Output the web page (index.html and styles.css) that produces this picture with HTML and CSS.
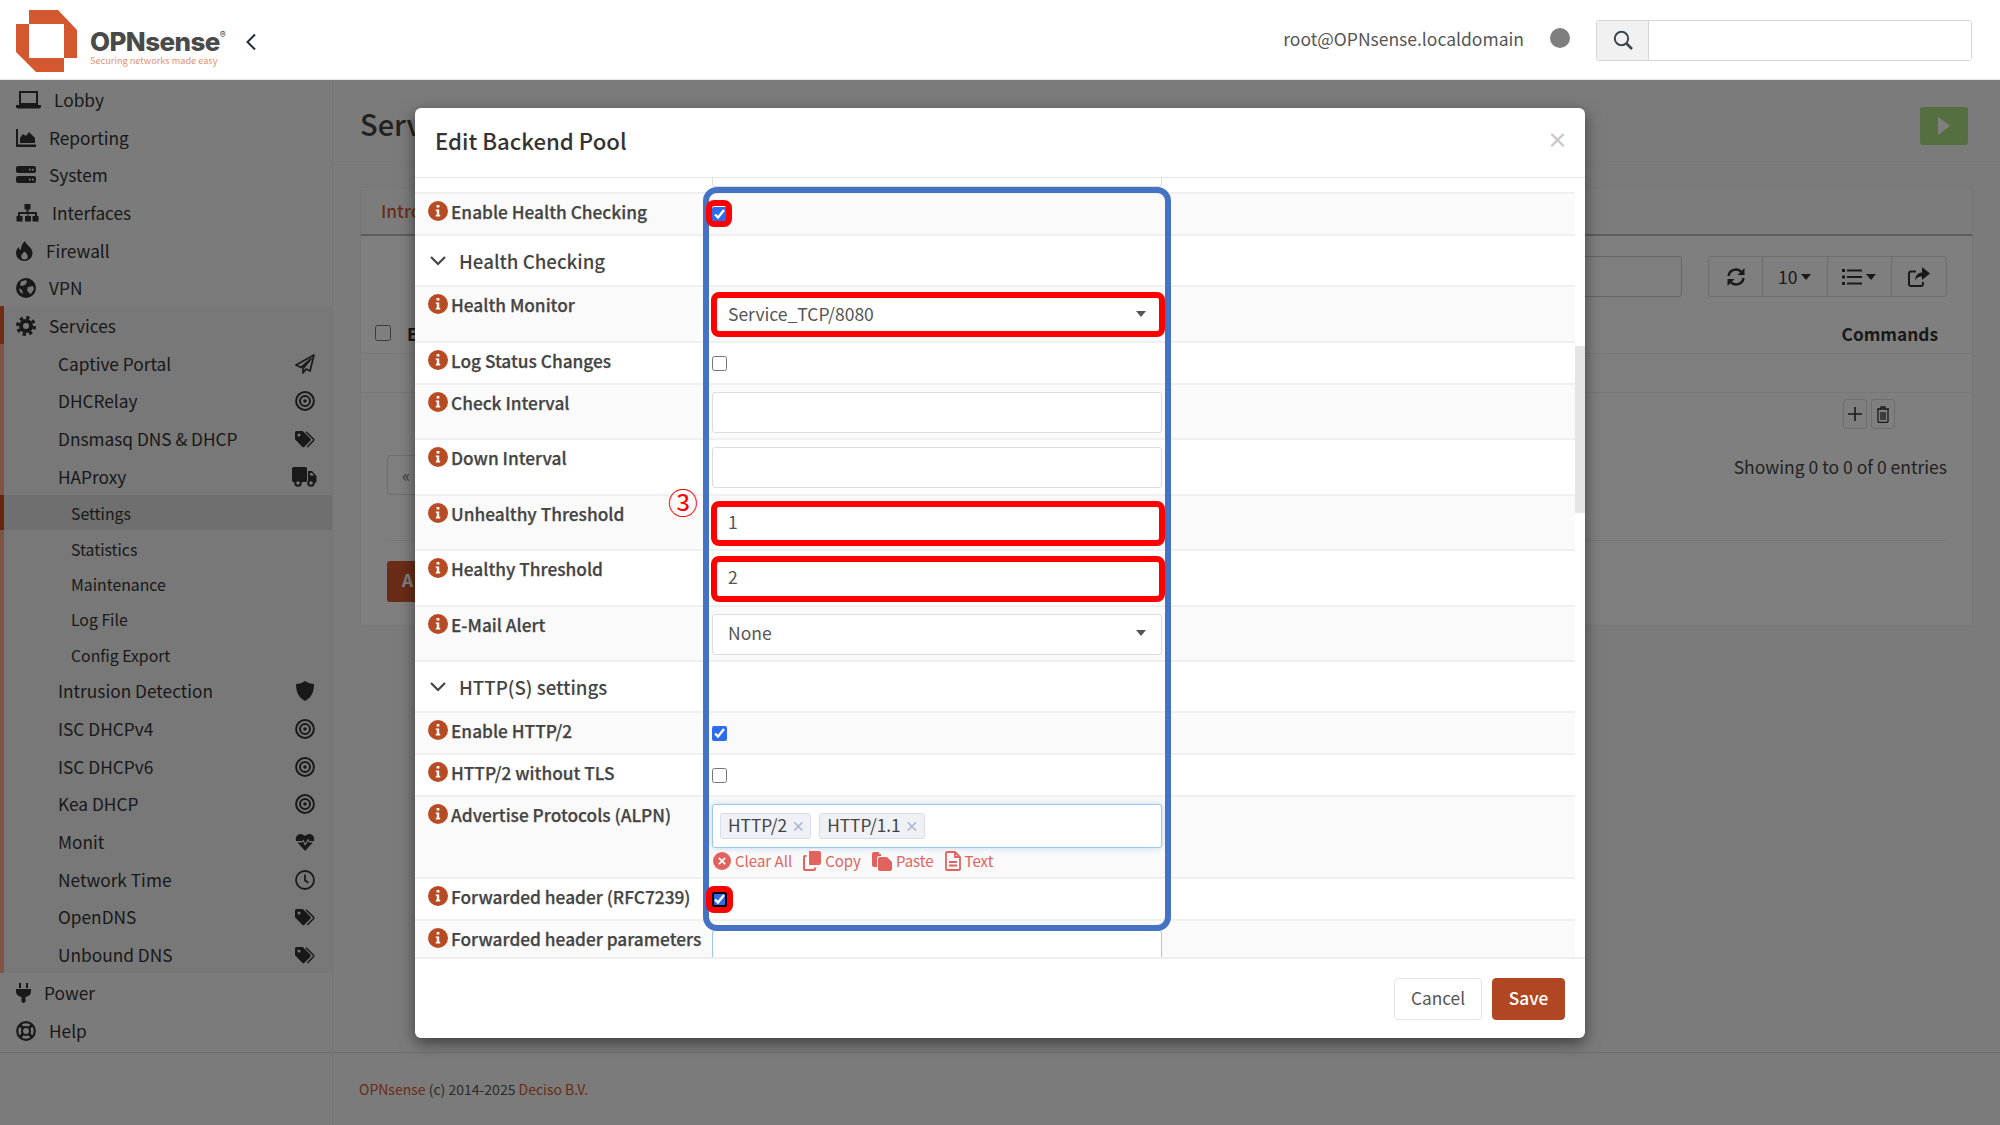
FILE: index.html
```html
<!doctype html>
<html lang="en">
<head>
<meta charset="UTF-8">
<title>OPNsense - HAProxy Settings</title>
<link rel="stylesheet" href="styles.css">
</head>
<body>
<svg class="defs" width="0" height="0">
<symbol id="i-target" viewBox="0 0 20 20"><circle cx="10" cy="10" r="8.9" fill="none" stroke="currentColor" stroke-width="2"/><circle cx="10" cy="10" r="5" fill="none" stroke="currentColor" stroke-width="2"/><circle cx="10" cy="10" r="1.8" fill="currentColor"/></symbol>
<symbol id="i-tags" viewBox="0 0 20 17"><path fill="currentColor" fill-rule="evenodd" d="M0 1.6A1.6 1.6 0 0 1 1.6 0h6.2l7.6 7.6a1.6 1.6 0 0 1 0 2.2l-6 6a1.6 1.6 0 0 1-2.2 0L0 8.2zM4 2.5a1.5 1.5 0 1 0 0 3 1.5 1.5 0 0 0 0-3z"/><path fill="none" stroke="currentColor" stroke-width="1.5" d="M11 .7l7.6 7.6a1 1 0 0 1 0 1.2l-6.3 6.5"/></symbol>
<symbol id="i-info" viewBox="0 0 20 20"><path fill="currentColor" fill-rule="evenodd" d="M10 0a10 10 0 1 1 0 20 10 10 0 0 1 0-20zM8.600 4v2.600h2.800V4zM7.800 8.400v1.700h1v3.700h-1v1.800h4.400v-1.800h-1V8.400z"/></symbol>
<symbol id="i-caret" viewBox="0 0 10 6"><path fill="currentColor" d="M0 0h10L5 6z"/></symbol>
</svg>

<header class="topbar">
<div class="brand">
<svg class="brand-mark" viewBox="0 0 62 62" width="62" height="62"><path fill="#d4582f" fill-rule="evenodd" d="M13 0h29l19 20v28H48v14H20L0 42V14h13zM13 14v34h35V14z"/></svg>
<div class="brand-text">
<div class="brand-name">OPNsense<sup>®</sup></div>
<div class="brand-tag">Securing networks made easy</div>
</div>
<svg class="brand-toggle" viewBox="0 0 12 18" width="12" height="18"><path d="M10 1.5L2.500 9l7.500 7.500" fill="none" stroke="#1f2d3d" stroke-width="2"/></svg>
</div>
<div class="topbar-right">
<span class="user">root@OPNsense.localdomain</span>
<span class="status-dot"></span>
<div class="search-group">
<span class="search-addon"><svg viewBox="0 0 20 20" width="20" height="20"><circle cx="8.500" cy="8.500" r="6.700" fill="none" stroke="#3a4650" stroke-width="2"/><path d="M13 13l6 6" stroke="#3a4650" stroke-width="2.600"/></svg></span>
<input class="search-input" type="text">
</div>
</div>
</header>

<div class="layout">
<aside class="sidebar">
<nav class="nav">
<a class="nav-item"><svg width="25" height="18" viewBox="0 0 25 18"><rect x="4" y="1" width="17" height="12" fill="none" stroke="currentColor" stroke-width="2"/><path fill="currentColor" d="M0 14h25v1.500a2 2 0 0 1-2 2H2a2 2 0 0 1-2-2z"/></svg>Lobby</a>
<a class="nav-item"><svg width="20" height="18" viewBox="0 0 20 18"><path fill="currentColor" d="M0 0h2v15.500h18V18H1a1 1 0 0 1-1-1z"/><path fill="currentColor" d="M4 14V9l3-4 3 2 3-4 6 6v5z"/></svg>Reporting</a>
<a class="nav-item"><svg width="20" height="18" viewBox="0 0 20 18"><path fill="currentColor" fill-rule="evenodd" d="M2 0h16a2 2 0 0 1 2 2v3a2 2 0 0 1-2 2H2a2 2 0 0 1-2-2V2a2 2 0 0 1 2-2zm11 2.700v1.700h1.700V2.700zm3 0v1.700h1.700V2.700zM2 10h16a2 2 0 0 1 2 2v3a2 2 0 0 1-2 2H2a2 2 0 0 1-2-2v-3a2 2 0 0 1 2-2zm11 2.700v1.700h1.700v-1.700zm3 0v1.700h1.700v-1.700z"/></svg>System</a>
<a class="nav-item nav-tight"><svg width="23" height="18" viewBox="0 0 23 18"><path fill="currentColor" d="M8.500 0h6v5.500h-2v2.500h7.500a1 1 0 0 1 1 1v3h1.500v5.500h-6V12h2.500v-2h-6.500v2h2.500v5.500h-6V12h2.500v-2H4v2h2.500v5.500h-6V12H2V9a1 1 0 0 1 1-1h7.500V5.500h-2z"/></svg>Interfaces</a>
<a class="nav-item"><svg width="17" height="20" viewBox="0 0 17 20"><path fill="currentColor" fill-rule="evenodd" d="M9 0c.8 4 7.500 6 7.500 12a8.250 8 0 0 1-16.500 0c0-3 1.500-5 3-6 0 2 .8 3 1.800 3C4.800 6 6 2.500 9 0zM8.500 10.500c-2 2-3.200 3.200-3.200 4.700a3.200 3.200 0 0 0 6.400 0c0-1.500-1.400-3-3.200-4.700z"/></svg>Firewall</a>
<a class="nav-item"><svg width="20" height="20" viewBox="0 0 20 20"><circle cx="10" cy="10" r="10" fill="currentColor"/><path fill="#f0f0f0" d="M5 3.500l5-1.500 1 2-2 3-3 1-2-1zM12 9l5-1 1 3-3 5-2-1-2-3zM3 10l3 2 1 4-3-2z"/></svg>VPN</a>
<a class="nav-item nav-services"><svg width="20" height="20" viewBox="0 0 20 20"><circle cx="10" cy="10" r="5" fill="none" stroke="currentColor" stroke-width="4"/><circle cx="10" cy="10" r="8.300" fill="none" stroke="currentColor" stroke-width="3.400" stroke-dasharray="3.300 3.220"/></svg>Services</a>
<div class="subnav">
<a class="sub-item">Captive Portal<svg width="20" height="20" viewBox="0 0 20 20"><path d="M19 1L1 11l5 2.500L16 5l-8 9.500V19l3-4 4 2z" fill="none" stroke="currentColor" stroke-width="1.700" stroke-linejoin="round"/></svg></a>
<a class="sub-item">DHCRelay<svg width="20" height="20"><use href="#i-target"/></svg></a>
<a class="sub-item">Dnsmasq DNS &amp; DHCP<svg width="20" height="17"><use href="#i-tags"/></svg></a>
<a class="sub-item">HAProxy<svg class="sub-truck" width="25" height="20" viewBox="0 0 25 20"><rect width="15" height="15" rx="1.500" fill="currentColor"/><path fill="currentColor" d="M16 4h4l4.500 5v6.500H16z"/><path fill="#f0f0f0" d="M18 6h2l2 2.500h-4z"/><circle cx="6" cy="16" r="2.800" fill="#f0f0f0" stroke="currentColor" stroke-width="2"/><circle cx="19" cy="16" r="2.800" fill="#f0f0f0" stroke="currentColor" stroke-width="2"/></svg></a>
<a class="subsub-item subsub-active">Settings</a>
<a class="subsub-item">Statistics</a>
<a class="subsub-item">Maintenance</a>
<a class="subsub-item">Log File</a>
<a class="subsub-item">Config Export</a>
<a class="sub-item">Intrusion Detection<svg width="20" height="20" viewBox="0 0 20 20"><path fill="currentColor" d="M10 0c2.700 1.800 6 3 9 3 0 8-2.500 13.500-9 17C3.500 16.500 1 11 1 3c3 0 6.300-1.200 9-3z"/></svg></a>
<a class="sub-item">ISC DHCPv4<svg width="20" height="20"><use href="#i-target"/></svg></a>
<a class="sub-item">ISC DHCPv6<svg width="20" height="20"><use href="#i-target"/></svg></a>
<a class="sub-item">Kea DHCP<svg width="20" height="20"><use href="#i-target"/></svg></a>
<a class="sub-item">Monit<svg width="20" height="17" viewBox="0 0 20 17"><path fill="currentColor" d="M1 7C0 3 2.500 0 5.500 0 7.500 0 9 1 10 2c1-1 2.500-2 4.500-2C17.500 0 20 3 19 7h-4.600l-1.400-2.500-2.700 5-2-4-1.200 1.500z"/><path fill="currentColor" d="M2.500 8.500h4.300l1-1.200 2.400 4.700 2.900-5.300.8 1.800h4L10 17z"/></svg></a>
<a class="sub-item">Network Time<svg width="20" height="20" viewBox="0 0 20 20"><circle cx="10" cy="10" r="9" fill="none" stroke="currentColor" stroke-width="1.800"/><path d="M10 4.500V10.500l3.500 2.300" fill="none" stroke="currentColor" stroke-width="1.800"/></svg></a>
<a class="sub-item">OpenDNS<svg width="20" height="17"><use href="#i-tags"/></svg></a>
<a class="sub-item">Unbound DNS<svg width="20" height="17"><use href="#i-tags"/></svg></a>
</div>
<a class="nav-item"><svg width="15" height="20" viewBox="0 0 15 20"><path fill="currentColor" d="M3 0h2v5H3zM10 0h2v5h-2zM0 6h15v2.500c0 3-2 5-5.500 5.500V19l-2 1-2-1v-5C2 13.500 0 11.500 0 8.500z"/></svg>Power</a>
<a class="nav-item"><svg width="20" height="20" viewBox="0 0 20 20"><circle cx="10" cy="10" r="8.800" fill="none" stroke="currentColor" stroke-width="2.200"/><circle cx="10" cy="10" r="4" fill="none" stroke="currentColor" stroke-width="2.200"/><path d="M4 4l3.200 3.200M16 4l-3.200 3.200M4 16l3.200-3.200M16 16l-3.200-3.200" stroke="currentColor" stroke-width="3"/></svg>Help</a>
</nav>
</aside>

<main class="content">
<div class="page-title">
<h1>Serv</h1>
<button class="run-btn"><svg width="12" height="18" viewBox="0 0 12 18"><path fill="#fff" d="M0 0l12 9-12 9z"/></svg></button>
</div>
<div class="content-wrap">
<div class="tabs"><span class="tab">Intro</span></div>
<section class="panel">
<div class="toolbar">
<div class="filter-box"></div>
<div class="btn-group">
<span class="tool tool-end"><svg width="20" height="20" viewBox="0 0 20 20"><path d="M2.500 9a7.500 7.500 0 0 1 13-4M17.500 11a7.500 7.500 0 0 1-13 4" fill="none" stroke="currentColor" stroke-width="2.400"/><path fill="currentColor" d="M18.500 1v7h-7zM1.500 19v-7h7z"/></svg></span>
<span class="tool tool-count">10<svg class="tool-caret" width="10" height="6"><use href="#i-caret"/></svg></span>
<span class="tool"><svg width="20" height="16" viewBox="0 0 20 16"><path fill="currentColor" d="M0 0h3v3H0zM5 .500h15v2H5zM0 6.500h3v3H0zM5 7h15v2H5zM0 13h3v3H0zM5 13.500h15v2H5z"/></svg><svg class="tool-caret" width="10" height="6"><use href="#i-caret"/></svg></span>
<span class="tool tool-end"><svg width="22" height="20" viewBox="0 0 22 20"><path d="M8 4.500H3a2 2 0 0 0-2 2V17a2 2 0 0 0 2 2h10a2 2 0 0 0 2-2v-2" fill="none" stroke="currentColor" stroke-width="2"/><path fill="currentColor" d="M14 0l8 6.500-8 6.500V9.500c-3.500 0-5.500 1-7 4.500 0-5 2.500-8 7-8.500z"/></svg></span>
</div>
</div>
<div class="grid-head"><input class="grid-check" type="checkbox"><span class="grid-e">E</span><span class="grid-cmd">Commands</span></div>
<div class="grid-empty"></div>
<div class="grid-actions">
<span class="mini-btn"><svg width="14" height="14" viewBox="0 0 14 14"><path d="M7 0v14M0 7h14" stroke="currentColor" stroke-width="1.600"/></svg></span>
<span class="mini-btn"><svg width="14" height="17" viewBox="0 0 14 17"><path d="M1 3h12M5 3V1h4v2M2 3v12a1.500 1.500 0 0 0 1.500 1.500h7A1.500 1.500 0 0 0 12 15V3M5 6v8M7 6v8M9 6v8" fill="none" stroke="currentColor" stroke-width="1.300"/></svg></span>
</div>
<div class="pager-row"><span class="pager">«</span><span class="showing">Showing 0 to 0 of 0 entries</span></div>
<div class="apply-row"><span class="apply-btn">A</span></div>
</section>
</div>
<footer class="page-footer"><a>OPNsense</a> (c) 2014-2025 <a>Deciso B.V.</a></footer>
</main>
</div>

<div class="backdrop"></div>

<div class="modal">
<div class="modal-head"><h4>Edit Backend Pool</h4><span class="modal-close">×</span></div>
<div class="modal-body">
<div class="scroll-track"><div class="scroll-thumb"></div></div>
<div class="form">
<div class="row-stub"><div class="stub-input"></div></div>
<div class="group">
<div class="row row-check"><label class="lbl"><svg width="20" height="20"><use href="#i-info"/></svg>Enable Health Checking</label><div class="ctl"><input type="checkbox" checked></div></div>
</div>
<div class="section-title"><svg width="16" height="10" viewBox="0 0 16 10"><path d="M1 1l7 7 7-7" fill="none" stroke="#444" stroke-width="2.200"/></svg>Health Checking</div>
<div class="group">
<div class="row row-input"><label class="lbl"><svg width="20" height="20"><use href="#i-info"/></svg>Health Monitor</label><div class="ctl"><div class="select">Service_TCP/8080<svg width="10" height="6"><use href="#i-caret"/></svg></div></div></div>
<div class="row row-check"><label class="lbl"><svg width="20" height="20"><use href="#i-info"/></svg>Log Status Changes</label><div class="ctl"><input type="checkbox"></div></div>
<div class="row row-input"><label class="lbl"><svg width="20" height="20"><use href="#i-info"/></svg>Check Interval</label><div class="ctl"><input class="text" type="text"></div></div>
<div class="row row-input"><label class="lbl"><svg width="20" height="20"><use href="#i-info"/></svg>Down Interval</label><div class="ctl"><input class="text" type="text"></div></div>
<div class="row row-input"><label class="lbl"><svg width="20" height="20"><use href="#i-info"/></svg>Unhealthy Threshold</label><div class="ctl"><input class="text" type="text" value="1"></div></div>
<div class="row row-input"><label class="lbl"><svg width="20" height="20"><use href="#i-info"/></svg>Healthy Threshold</label><div class="ctl"><input class="text" type="text" value="2"></div></div>
<div class="row row-input"><label class="lbl"><svg width="20" height="20"><use href="#i-info"/></svg>E-Mail Alert</label><div class="ctl"><div class="select">None<svg width="10" height="6"><use href="#i-caret"/></svg></div></div></div>
</div>
<div class="section-title"><svg width="16" height="10" viewBox="0 0 16 10"><path d="M1 1l7 7 7-7" fill="none" stroke="#444" stroke-width="2.200"/></svg>HTTP(S) settings</div>
<div class="group">
<div class="row row-check"><label class="lbl"><svg width="20" height="20"><use href="#i-info"/></svg>Enable HTTP/2</label><div class="ctl"><input type="checkbox" checked></div></div>
<div class="row row-check"><label class="lbl"><svg width="20" height="20"><use href="#i-info"/></svg>HTTP/2 without TLS</label><div class="ctl"><input type="checkbox"></div></div>
<div class="row row-alpn"><label class="lbl"><svg width="20" height="20"><use href="#i-info"/></svg>Advertise Protocols (ALPN)</label>
<div class="ctl">
<div class="tokens"><span class="token">HTTP/2<i>×</i></span><span class="token">HTTP/1.1<i>×</i></span></div>
<div class="token-actions">
<a><svg width="18" height="18" viewBox="0 0 18 18"><path fill="currentColor" fill-rule="evenodd" d="M9 0a9 9 0 1 1 0 18A9 9 0 0 1 9 0zM6.500 5.200L5.200 6.500 7.700 9l-2.500 2.500 1.300 1.300L9 10.300l2.500 2.500 1.300-1.300L10.300 9l2.500-2.500-1.300-1.300L9 7.700z"/></svg>Clear All</a>
<a><svg width="18" height="20" viewBox="0 0 18 20"><path fill="currentColor" d="M6 0h10a2 2 0 0 1 2 2v10a2 2 0 0 1-2 2H6z"/><path d="M3.500 5H2a1 1 0 0 0-1 1v12a1 1 0 0 0 1 1h9a1 1 0 0 0 1-1v-1.500" fill="none" stroke="currentColor" stroke-width="2"/></svg>Copy</a>
<a><svg width="20" height="20" viewBox="0 0 20 20"><path fill="currentColor" d="M2 1h5v2h2v2H7a2 2 0 0 0-2 2v9H2a2 2 0 0 1-2-2V3a2 2 0 0 1 2-2z"/><path fill="currentColor" d="M8 6h7l5 5v7a2 2 0 0 1-2 2H8a2 2 0 0 1-2-2V8a2 2 0 0 1 2-2z"/></svg>Paste</a>
<a><svg width="16" height="20" viewBox="0 0 16 20"><path d="M1 2a1 1 0 0 1 1-1h8l5 5v12a1 1 0 0 1-1 1H2a1 1 0 0 1-1-1zM10 1v5h5M4 11h8M4 14.500h8" fill="none" stroke="currentColor" stroke-width="1.800"/></svg>Text</a>
</div>
</div></div>
<div class="row row-check"><label class="lbl"><svg width="20" height="20"><use href="#i-info"/></svg>Forwarded header (RFC7239)</label><div class="ctl"><input class="focused" type="checkbox" checked></div></div>
<div class="row row-cut"><label class="lbl"><svg width="20" height="20"><use href="#i-info"/></svg>Forwarded header parameters</label><div class="ctl"><div class="cut-input"></div></div></div>
</div>
</div>
</div>
<div class="modal-foot"><button class="btn btn-cancel">Cancel</button><button class="btn btn-save">Save</button></div>
</div>

<!-- annotations drawn on top of the screenshot -->
<div class="note note-blue"></div>
<div class="note note-red note-check-1"></div>
<div class="note note-red note-monitor"></div>
<div class="note note-red note-unhealthy"></div>
<div class="note note-red note-healthy"></div>
<div class="note note-red note-check-2"></div>
<span class="note-num">③</span>
</body>
</html>
```

FILE: styles.css
```css
* {
box-sizing: border-box;
}
html, body {
margin: 0;
height: 1125px;
overflow: hidden;
}
body {
font-family: "Noto Sans CJK JP", "Open Sans", sans-serif;
font-size: 17.300px;
line-height: 24px;
color: #444;
background: #f7f7f7;
position: relative;
}
.defs {
position: absolute;
}

/* top bar */
.topbar {
height: 80px;
background: #fff;
border-bottom: 1px solid #e4e4e4;
display: flex;
justify-content: space-between;
align-items: center;
position: relative;
z-index: 20;
padding: 0 28px 0 16px;
}
.brand {
display: flex;
align-items: center;
}
.brand-mark {
margin-top: 3px;
}
.brand-text {
margin-left: 12px;
width: 144px;
padding-top: 15px;
}
.brand-name {
font-family: Inter, sans-serif;
font-weight: 800;
font-size: 26px;
line-height: 26px;
letter-spacing: -0.6px;
color: #4a4a4a;
white-space: nowrap;
}
.brand-name sup {
font-size: 9px;
font-weight: 400;
line-height: 0;
vertical-align: 13px;
letter-spacing: 0;
}
.brand-tag {
font-size: 9.200px;
line-height: 11px;
color: #e3906f;
white-space: nowrap;
}
.brand-toggle {
margin: 4px 0 0 11px;
}
.topbar-right {
display: flex;
align-items: center;
}
.user {
font-size: 17.500px;
color: #555;
margin-top: -2px;
}
.status-dot {
width: 20px;
height: 20px;
border-radius: 50%;
background: #7f7f7f;
margin: -4px 26px 0 26px;
}
.search-group {
display: flex;
width: 376px;
height: 41px;
border: 1px solid #d5d5d5;
border-radius: 3px;
margin-top: 1px;
}
.search-addon {
width: 52px;
background: #f1f1f1;
border-right: 1px solid #d5d5d5;
display: flex;
align-items: center;
justify-content: center;
}
.search-input {
flex: 1;
border: 0;
min-width: 0;
background: #fff;
}

/* page under the modal */
.layout {
display: flex;
height: 1045px;
}
.sidebar {
width: 333px;
border-right: 1px solid #e8e8e8;
flex-shrink: 0;
}
.nav {
border-bottom: 1px solid #ddd;
height: 973px;
color: #333;
}
.nav-item {
height: 37.700px;
display: flex;
align-items: center;
gap: 13px;
padding: 2px 0 0 16px;
font-size: 17.300px;
}
.nav-services {
background: #f1f1f1;
box-shadow: inset 4px 0 0 #e0592a;
}
.subnav {
background: #f1f1f1;
box-shadow: inset 4px 0 0 #ffa98a;
}
.sub-item {
height: 37.700px;
display: flex;
align-items: center;
justify-content: space-between;
padding: 2px 17px 0 58px;
font-size: 17.300px;
}
.sub-truck {
margin-right: -2px;
}
.subsub-item {
height: 35.400px;
display: flex;
align-items: center;
padding: 4px 0 0 71px;
font-size: 15.800px;
}
.subsub-active {
background: #dedede;
box-shadow: inset 4px 0 0 #d0481a;
}

.content {
flex: 1;
min-width: 0;
display: flex;
flex-direction: column;
}
.page-title {
height: 85px;
border-bottom: 1px solid #eee;
display: flex;
justify-content: space-between;
align-items: flex-start;
padding: 27px 32px 0 27px;
}
.page-title h1 {
margin: -2px 0 0;
font-size: 29px;
line-height: 36px;
font-weight: 500;
color: #444;
}
.run-btn {
width: 48px;
height: 38px;
border: 0;
border-radius: 3px;
background: #acdf80;
display: flex;
align-items: center;
justify-content: center;
}
.content-wrap {
margin: 22px 27px 0 27px;
height: 439px;
flex-shrink: 0;
}
.tabs {
height: 49px;
border: 1px solid #eee;
border-bottom: 2px solid #bbb;
padding: 11px 20px;
background: #f9f9f9;
}
.tab {
color: #d4582f;
font-weight: 500;
}
.panel {
background: #fff;
height: 390px;
border: 1px solid #eee;
border-top: 0;
padding: 20px 25px 0 26px;
}
.toolbar {
display: flex;
justify-content: flex-end;
gap: 26px;
height: 41px;
}
.filter-box {
width: 500px;
border: 1px solid #ccc;
border-radius: 3px;
}
.btn-group {
display: flex;
border: 1px solid #ddd;
border-radius: 3px;
width: 239px;
color: #333;
}
.tool {
flex: 1;
display: flex;
align-items: center;
justify-content: center;
gap: 4px;
border-right: 1px solid #ddd;
}
.tool-end {
flex: 0 0 54px;
}
.tool:last-child {
border-right: 0;
}
.tool-count {
font-size: 17.500px;
}
.grid-head {
margin: 0 -25px 0 -26px;
padding: 0 0 7px 14px;
height: 57px;
border-bottom: 1px solid #eee;
display: flex;
align-items: flex-end;
font-weight: 600;
color: #333;
}
.grid-check {
width: 16px;
height: 16px;
margin: 0 16px 5px 0;
}
.grid-cmd {
margin-left: auto;
margin-right: 34px;
}
.grid-empty {
margin: 0 -25px 0 -26px;
height: 39px;
border-bottom: 1px solid #eee;
}
.grid-actions {
display: flex;
justify-content: flex-end;
gap: 4px;
padding: 6px 52px 0 0;
height: 43px;
}
.mini-btn {
width: 24px;
height: 30px;
border: 1px solid #ddd;
border-radius: 3px;
color: #333;
display: flex;
align-items: center;
justify-content: center;
}
.pager-row {
display: flex;
justify-content: space-between;
align-items: center;
height: 40px;
margin-top: 19px;
}
.pager {
width: 60px;
height: 40px;
border: 1px solid #ddd;
border-radius: 3px;
color: #777;
padding: 7px 14px;
}
.showing {
font-size: 17.500px;
margin-top: -16px;
}
.apply-row {
margin-top: 45px;
border-top: 1px solid #eee;
padding-top: 20px;
}
.apply-btn {
display: block;
width: 80px;
height: 41px;
border-radius: 3px;
background: #d4582f;
color: #fff;
font-weight: 700;
padding: 7px 15px;
}
.page-footer {
margin-top: auto;
height: 73px;
border-top: 1px solid #ddd;
padding: 26px 27px 0 26px;
font-size: 14px;
line-height: 20px;
color: #555;
}
.page-footer a {
color: #d4582f;
}

/* modal */
.backdrop {
position: absolute;
inset: 80px 0 0 0;
background: rgba(0, 0, 0, 0.5);
z-index: 10;
}
.modal {
position: absolute;
left: 415px;
top: 108px;
width: 1170px;
height: 930px;
background: #fff;
border-radius: 6px;
box-shadow: 0 5px 15px rgba(0, 0, 0, 0.5);
z-index: 11;
display: flex;
flex-direction: column;
overflow: hidden;
}
.modal-head {
height: 70px;
flex-shrink: 0;
border-bottom: 1px solid #e5e5e5;
display: flex;
align-items: center;
justify-content: space-between;
padding: 0 20px;
}
.modal-head h4 {
margin: -6px 0 0;
font-size: 22.200px;
line-height: 30px;
font-weight: 500;
color: #333;
}
.modal-close {
font-size: 21px;
font-weight: 700;
color: #c8c8c8;
margin: -8px -3px 0 0;
}
.modal-body {
flex: 1;
min-height: 0;
position: relative;
overflow: hidden;
}
.scroll-track {
position: absolute;
right: 0;
top: 0;
bottom: 0;
width: 10px;
background: #fff;
}
.scroll-thumb {
margin-top: 168px;
height: 167px;
background: #e5e5e5;
}
.form {
width: 1160px;
}
.row-stub {
height: 16px;
border-bottom: 2px solid #f0f0f0;
padding-left: 297px;
}
.stub-input {
width: 450px;
height: 9px;
border: 1px solid #ddd;
border-top: 0;
border-radius: 0 0 3px 3px;
}
.row {
display: grid;
grid-template-columns: 297px 450px;
border-bottom: 2px solid #f0f0f0;
}
.group .row:nth-child(odd) {
background: #fafafa;
}
.row-check {
height: 42px;
}
.row-input {
height: 55.500px;
}
.row-alpn {
height: 82px;
}
.row-cut {
height: 36px;
border-bottom: 0;
overflow: hidden;
}
.lbl {
display: flex;
align-items: flex-start;
gap: 3px;
padding: 7px 0 0 13px;
font-weight: 500;
font-size: 17.300px;
line-height: 22px;
color: #444;
white-space: nowrap;
-webkit-text-stroke: 0.25px #444;
}
.lbl svg {
color: #b74c24;
flex-shrink: 0;
}
.ctl {
padding-top: 7px;
min-width: 0;
}
.row-check .ctl {
padding-top: 13px;
}
.row-alpn .ctl,
.row-cut .ctl {
padding-top: 9px;
}
.ctl input[type="checkbox"] {
width: 15px;
height: 15px;
margin: 0;
display: block;
accent-color: #2f6bef;
}
.ctl input.focused {
outline: 2px solid #000;
outline-offset: -2px;
}
.text,
.select {
width: 450px;
height: 41px;
border: 1px solid #ddd;
border-radius: 3px;
background: #fff;
font: inherit;
font-size: 17.500px;
color: #555;
padding: 0 15px 4px;
display: flex;
align-items: center;
justify-content: space-between;
}
.select {
padding-bottom: 2px;
}
.section-title {
height: 51px;
display: flex;
align-items: center;
gap: 13px;
padding-left: 15px;
font-weight: 500;
font-size: 18.700px;
color: #444;
border-bottom: 2px solid #f0f0f0;
}
.tokens {
width: 450px;
height: 44px;
margin-top: -2px;
border: 1px solid #9fc6ee;
border-radius: 3px;
background: #fff;
box-shadow: 0 0 6px rgba(102, 175, 233, 0.4);
display: flex;
align-items: center;
gap: 8px;
padding-left: 7px;
}
.token {
height: 26px;
display: flex;
align-items: center;
gap: 4px;
padding: 0 5px 2px 7px;
background: #eff1f6;
border: 1px solid #d8dce8;
border-radius: 3px;
font-size: 17.300px;
color: #444;
}
.token i {
font-style: normal;
color: #a9b6d3;
font-size: 14px;
font-weight: 700;
}
.token-actions {
display: flex;
gap: 11px;
margin-top: 3px;
padding-left: 1px;
color: #e2635d;
font-size: 15px;
line-height: 20px;
}
.token-actions a {
display: flex;
align-items: center;
gap: 4px;
}
.cut-input {
width: 450px;
height: 44px;
border: 1px solid #9fc6ee;
border-radius: 3px;
background: #fff;
}
.modal-foot {
height: 81px;
flex-shrink: 0;
border-top: 2px solid #eee;
display: flex;
justify-content: flex-end;
gap: 10px;
padding: 19px 20px 0 0;
}
.btn {
height: 42px;
border-radius: 4px;
font: inherit;
font-size: 17.300px;
padding-bottom: 4px;
}
.btn-cancel {
width: 88px;
background: #fff;
border: 1px solid #e5e5e5;
color: #555;
}
.btn-save {
width: 73px;
background: #b04722;
border: 1px solid #b04722;
color: #fff;
font-weight: 500;
}

/* annotations */
.note {
position: absolute;
z-index: 12;
}
.note-blue {
left: 703px;
top: 187px;
width: 468px;
height: 744px;
border: 6px solid #4472c4;
border-radius: 14px;
}
.note-red {
border: 6px solid #f00;
border-radius: 8px;
}
.note-check-1 {
left: 706px;
top: 200px;
width: 26px;
height: 27px;
}
.note-check-2 {
left: 706px;
top: 886px;
width: 27px;
height: 27px;
}
.note-monitor {
left: 711px;
top: 292px;
width: 454px;
height: 45px;
}
.note-unhealthy {
left: 711px;
top: 501px;
width: 454px;
height: 45px;
}
.note-healthy {
left: 711px;
top: 556px;
width: 454px;
height: 46px;
}
.note-num {
position: absolute;
z-index: 12;
left: 667px;
top: 481px;
width: 32px;
text-align: center;
font-size: 30px;
line-height: 40px;
color: #f00;
}
```
